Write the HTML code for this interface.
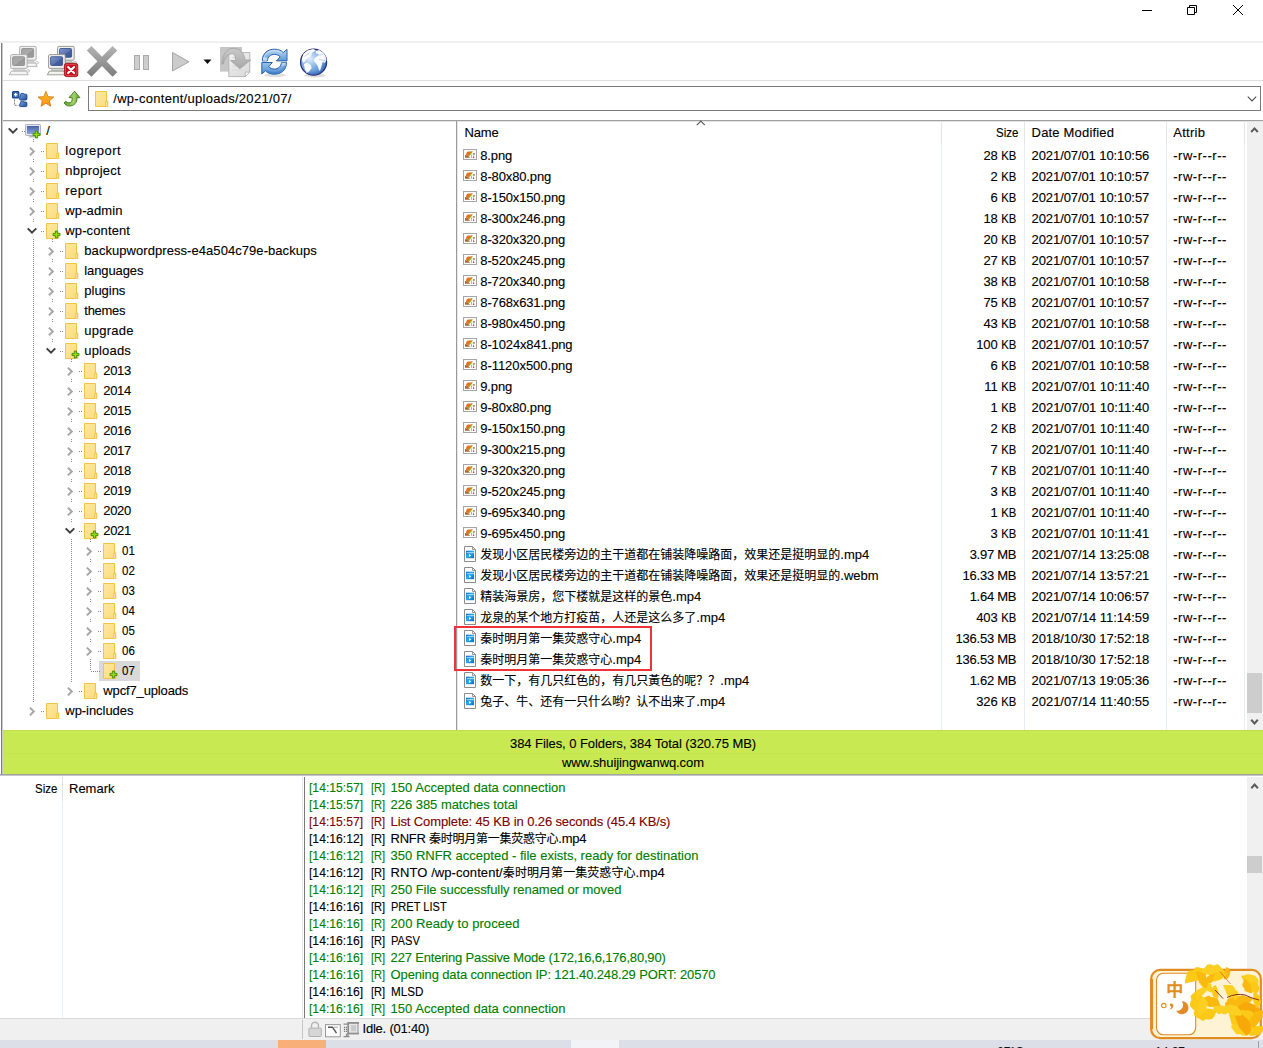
<!DOCTYPE html><html><head><meta charset="utf-8"><title>FTP</title><style>
*{box-sizing:border-box;margin:0;padding:0}
html,body{width:1263px;height:1048px;overflow:hidden;background:#fff}
body{font-family:"Liberation Sans","Noto Sans CJK SC",sans-serif;font-size:13px;color:#000;position:relative;line-height:16px;-webkit-text-stroke:0.12px}
.a{position:absolute;white-space:nowrap}
.cj{font-size:12px}
.t{position:absolute;white-space:nowrap;height:20px;line-height:20px}
.r{position:absolute;white-space:nowrap;height:21px;line-height:21px}
.l{position:absolute;white-space:nowrap;height:17px;line-height:17px}
.s{position:absolute;white-space:nowrap;height:17px;line-height:17px}
.u{display:inline-block;transform:scaleX(.87);transform-origin:100% 50%;margin-left:-2.3px}
.g{color:#008000}.rd{color:#800000}
#ov{position:absolute;left:0;top:0;pointer-events:none}
</style></head><body>
<div class="a" style="left:0px;top:41px;width:1263px;height:2px;background:#f0f0f0;"></div>
<div class="a" style="left:3px;top:80px;width:1260px;height:1px;background:#dedede;"></div>
<div class="a" style="left:1px;top:43px;width:1px;height:731px;background:#7e7e7e;"></div>
<div class="a" style="left:2px;top:43px;width:1px;height:731px;background:#c9c9c9;"></div>
<div class="a" style="left:3px;top:120px;width:1260px;height:1px;background:#a0a0a0;"></div>
<div class="a" style="left:3px;top:121px;width:1260px;height:1px;background:#e4e4e4;"></div>
<div class="a" style="left:88px;top:86px;width:1173px;height:25px;background:#fff;border:1px solid #7a7a7a"></div>
<div class="a" style="left:99px;top:661px;width:41px;height:20px;background:#d9d9d9;"></div>
<div class="a" style="left:456px;top:121px;width:1px;height:609px;background:#9a9a9a;"></div>
<div class="a" style="left:457px;top:121px;width:1px;height:609px;background:#e8e8e8;"></div>
<div class="a" style="left:941px;top:122px;width:1px;height:22px;background:#e5e5e5;"></div>
<div class="a" style="left:941px;top:144px;width:1px;height:586px;background:#e8eef7;"></div>
<div class="a" style="left:1024px;top:122px;width:1px;height:22px;background:#e5e5e5;"></div>
<div class="a" style="left:1024px;top:144px;width:1px;height:586px;background:#e8eef7;"></div>
<div class="a" style="left:1166px;top:122px;width:1px;height:22px;background:#e5e5e5;"></div>
<div class="a" style="left:1166px;top:144px;width:1px;height:586px;background:#e8eef7;"></div>
<div class="a" style="left:1244px;top:122px;width:1px;height:22px;background:#e5e5e5;"></div>
<div class="a" style="left:1244px;top:144px;width:1px;height:586px;background:#e8eef7;"></div>
<div class="a" style="left:454px;top:626px;width:198px;height:44.5px;background:transparent;border:2px solid #f0323a"></div>
<div class="a" style="left:1246.5px;top:122px;width:16.5px;height:608px;background:#f0f0f0;"></div>
<div class="a" style="left:1247px;top:673px;width:15px;height:40px;background:#cdcdcd;"></div>
<div class="a" style="left:3px;top:730px;width:1260px;height:44px;background:#c8e952;"></div>
<div class="a" style="left:3px;top:730px;width:1260px;height:1px;background:#bfe04a;"></div>
<div class="a" style="left:3px;top:753px;width:1260px;height:1px;background:#c4e54f;"></div>
<div class="a" style="left:0px;top:774px;width:1263px;height:1px;background:#a2a2a2;"></div>
<div class="a" style="left:0px;top:775px;width:1263px;height:1px;background:#c6c6c6;"></div>
<div class="a" style="left:62px;top:777px;width:1px;height:24px;background:#e2e2e2;"></div>
<div class="a" style="left:62px;top:801px;width:1px;height:217px;background:#eaf1fb;"></div>
<div class="a" style="left:302px;top:777px;width:1px;height:241px;background:#e6e8f0;"></div>
<div class="a" style="left:304px;top:777px;width:1px;height:241px;background:#7a7a7a;"></div>
<div class="a" style="left:1247px;top:777px;width:16px;height:241px;background:#f0f0f0;"></div>
<div class="a" style="left:1247px;top:856px;width:15px;height:17px;background:#cdcdcd;"></div>
<div class="a" style="left:0px;top:1018px;width:1263px;height:22px;background:#f0f0f0;"></div>
<div class="a" style="left:0px;top:1017.5px;width:1263px;height:1px;background:#dadada;"></div>
<div class="a" style="left:302px;top:1019.5px;width:1px;height:19px;background:#c6c6c6;"></div>
<div class="a" style="left:0px;top:1040px;width:1263px;height:8px;background:#dcdfe8;"></div>
<div class="a" style="left:278px;top:1040px;width:48px;height:8px;background:#f8b078;"></div>
<div class="a" style="left:571px;top:1040px;width:48px;height:8px;background:#f2f3f7;"></div>
<div class="a" style="left:997px;top:1045.500px;font-size:12px;line-height:12px;color:#111">67°C</div>
<div class="a" style="left:1155px;top:1045.500px;font-size:12px;line-height:12px;color:#111">14:27</div>
<div class="a" style="left:1258px;top:1041px;width:1px;height:7px;background:#9aa0ae;"></div>
<div class="s" style="top:90px;left:113.3px;letter-spacing:0.28px;">/wp-content/uploads/2021/07/</div>
<div class="t" style="top:121px;left:46.3px;">/</div>
<div class="t" style="top:141px;left:65.3px;letter-spacing:0.5px;">logreport</div>
<div class="t" style="top:161px;left:65.3px;letter-spacing:0.23px;">nbproject</div>
<div class="t" style="top:181px;left:65.3px;letter-spacing:0.49px;">report</div>
<div class="t" style="top:201px;left:65.3px;letter-spacing:0.12px;">wp-admin</div>
<div class="t" style="top:221px;left:65.3px;letter-spacing:0.12px;">wp-content</div>
<div class="t" style="top:241px;left:84.3px;letter-spacing:0.06px;">backupwordpress-e4a504c79e-backups</div>
<div class="t" style="top:261px;left:84.3px;letter-spacing:-0.1px;">languages</div>
<div class="t" style="top:281px;left:84.3px;letter-spacing:-0.02px;">plugins</div>
<div class="t" style="top:301px;left:84.3px;letter-spacing:-0.27px;">themes</div>
<div class="t" style="top:321px;left:84.3px;letter-spacing:0.25px;">upgrade</div>
<div class="t" style="top:341px;left:84.3px;letter-spacing:0.16px;">uploads</div>
<div class="t" style="top:361px;left:103.3px;letter-spacing:-0.37px;">2013</div>
<div class="t" style="top:381px;left:103.3px;letter-spacing:-0.37px;">2014</div>
<div class="t" style="top:401px;left:103.3px;letter-spacing:-0.37px;">2015</div>
<div class="t" style="top:421px;left:103.3px;letter-spacing:-0.37px;">2016</div>
<div class="t" style="top:441px;left:103.3px;letter-spacing:-0.37px;">2017</div>
<div class="t" style="top:461px;left:103.3px;letter-spacing:-0.37px;">2018</div>
<div class="t" style="top:481px;left:103.3px;letter-spacing:-0.37px;">2019</div>
<div class="t" style="top:501px;left:103.3px;letter-spacing:-0.37px;">2020</div>
<div class="t" style="top:521px;left:103.3px;letter-spacing:-0.37px;">2021</div>
<div class="t" style="top:541px;left:122.3px;transform:scaleX(0.885);transform-origin:0 50%;">01</div>
<div class="t" style="top:561px;left:122.3px;transform:scaleX(0.885);transform-origin:0 50%;">02</div>
<div class="t" style="top:581px;left:122.3px;transform:scaleX(0.885);transform-origin:0 50%;">03</div>
<div class="t" style="top:601px;left:122.3px;transform:scaleX(0.885);transform-origin:0 50%;">04</div>
<div class="t" style="top:621px;left:122.3px;transform:scaleX(0.885);transform-origin:0 50%;">05</div>
<div class="t" style="top:641px;left:122.3px;transform:scaleX(0.885);transform-origin:0 50%;">06</div>
<div class="t" style="top:661px;left:122.3px;transform:scaleX(0.885);transform-origin:0 50%;">07</div>
<div class="t" style="top:681px;left:103.3px;letter-spacing:-0.14px;">wpcf7_uploads</div>
<div class="t" style="top:701px;left:65.3px;letter-spacing:-0.05px;">wp-includes</div>
<div class="r" style="top:122px;left:464.6px;letter-spacing:-0.2px;">Name</div>
<div class="r" style="top:122px;left:996px;transform:scaleX(0.885);transform-origin:0 50%;">Size</div>
<div class="r" style="top:122px;left:1031.6px;letter-spacing:0.18px;">Date Modified</div>
<div class="r" style="top:122px;left:1173.2px;letter-spacing:0.29px;">Attrib</div>
<div class="r" style="top:145px;left:480.3px;letter-spacing:-0.16px;">8.png</div>
<div class="r" style="top:145px;left:983.38px;">28 <span class="u">KB</span></div>
<div class="r" style="top:145px;left:1031.6px;letter-spacing:-0.09px;">2021/07/01 10:10:56</div>
<div class="r" style="top:145px;left:1173.2px;letter-spacing:0.54px;">-rw-r--r--</div>
<div class="r" style="top:166px;left:480.3px;letter-spacing:-0.13px;">8-80x80.png</div>
<div class="r" style="top:166px;left:990.61px;">2 <span class="u">KB</span></div>
<div class="r" style="top:166px;left:1031.6px;letter-spacing:-0.09px;">2021/07/01 10:10:57</div>
<div class="r" style="top:166px;left:1173.2px;letter-spacing:0.54px;">-rw-r--r--</div>
<div class="r" style="top:187px;left:480.3px;letter-spacing:-0.15px;">8-150x150.png</div>
<div class="r" style="top:187px;left:990.61px;">6 <span class="u">KB</span></div>
<div class="r" style="top:187px;left:1031.6px;letter-spacing:-0.09px;">2021/07/01 10:10:57</div>
<div class="r" style="top:187px;left:1173.2px;letter-spacing:0.54px;">-rw-r--r--</div>
<div class="r" style="top:208px;left:480.3px;letter-spacing:-0.15px;">8-300x246.png</div>
<div class="r" style="top:208px;left:983.38px;">18 <span class="u">KB</span></div>
<div class="r" style="top:208px;left:1031.6px;letter-spacing:-0.09px;">2021/07/01 10:10:57</div>
<div class="r" style="top:208px;left:1173.2px;letter-spacing:0.54px;">-rw-r--r--</div>
<div class="r" style="top:229px;left:480.3px;letter-spacing:-0.15px;">8-320x320.png</div>
<div class="r" style="top:229px;left:983.38px;">20 <span class="u">KB</span></div>
<div class="r" style="top:229px;left:1031.6px;letter-spacing:-0.09px;">2021/07/01 10:10:57</div>
<div class="r" style="top:229px;left:1173.2px;letter-spacing:0.54px;">-rw-r--r--</div>
<div class="r" style="top:250px;left:480.3px;letter-spacing:-0.15px;">8-520x245.png</div>
<div class="r" style="top:250px;left:983.38px;">27 <span class="u">KB</span></div>
<div class="r" style="top:250px;left:1031.6px;letter-spacing:-0.09px;">2021/07/01 10:10:57</div>
<div class="r" style="top:250px;left:1173.2px;letter-spacing:0.54px;">-rw-r--r--</div>
<div class="r" style="top:271px;left:480.3px;letter-spacing:-0.15px;">8-720x340.png</div>
<div class="r" style="top:271px;left:983.38px;">38 <span class="u">KB</span></div>
<div class="r" style="top:271px;left:1031.6px;letter-spacing:-0.09px;">2021/07/01 10:10:58</div>
<div class="r" style="top:271px;left:1173.2px;letter-spacing:0.54px;">-rw-r--r--</div>
<div class="r" style="top:292px;left:480.3px;letter-spacing:-0.15px;">8-768x631.png</div>
<div class="r" style="top:292px;left:983.38px;">75 <span class="u">KB</span></div>
<div class="r" style="top:292px;left:1031.6px;letter-spacing:-0.09px;">2021/07/01 10:10:57</div>
<div class="r" style="top:292px;left:1173.2px;letter-spacing:0.54px;">-rw-r--r--</div>
<div class="r" style="top:313px;left:480.3px;letter-spacing:-0.15px;">8-980x450.png</div>
<div class="r" style="top:313px;left:983.38px;">43 <span class="u">KB</span></div>
<div class="r" style="top:313px;left:1031.6px;letter-spacing:-0.09px;">2021/07/01 10:10:58</div>
<div class="r" style="top:313px;left:1173.2px;letter-spacing:0.54px;">-rw-r--r--</div>
<div class="r" style="top:334px;left:480.3px;letter-spacing:-0.13px;">8-1024x841.png</div>
<div class="r" style="top:334px;left:976.14px;">100 <span class="u">KB</span></div>
<div class="r" style="top:334px;left:1031.6px;letter-spacing:-0.09px;">2021/07/01 10:10:57</div>
<div class="r" style="top:334px;left:1173.2px;letter-spacing:0.54px;">-rw-r--r--</div>
<div class="r" style="top:355px;left:480.3px;letter-spacing:-0.06px;">8-1120x500.png</div>
<div class="r" style="top:355px;left:990.61px;">6 <span class="u">KB</span></div>
<div class="r" style="top:355px;left:1031.6px;letter-spacing:-0.09px;">2021/07/01 10:10:58</div>
<div class="r" style="top:355px;left:1173.2px;letter-spacing:0.54px;">-rw-r--r--</div>
<div class="r" style="top:376px;left:480.3px;letter-spacing:-0.16px;">9.png</div>
<div class="r" style="top:376px;left:984.35px;">11 <span class="u">KB</span></div>
<div class="r" style="top:376px;left:1031.6px;letter-spacing:-0.04px;">2021/07/01 10:11:40</div>
<div class="r" style="top:376px;left:1173.2px;letter-spacing:0.54px;">-rw-r--r--</div>
<div class="r" style="top:397px;left:480.3px;letter-spacing:-0.13px;">9-80x80.png</div>
<div class="r" style="top:397px;left:990.61px;">1 <span class="u">KB</span></div>
<div class="r" style="top:397px;left:1031.6px;letter-spacing:-0.04px;">2021/07/01 10:11:40</div>
<div class="r" style="top:397px;left:1173.2px;letter-spacing:0.54px;">-rw-r--r--</div>
<div class="r" style="top:418px;left:480.3px;letter-spacing:-0.15px;">9-150x150.png</div>
<div class="r" style="top:418px;left:990.61px;">2 <span class="u">KB</span></div>
<div class="r" style="top:418px;left:1031.6px;letter-spacing:-0.04px;">2021/07/01 10:11:40</div>
<div class="r" style="top:418px;left:1173.2px;letter-spacing:0.54px;">-rw-r--r--</div>
<div class="r" style="top:439px;left:480.3px;letter-spacing:-0.15px;">9-300x215.png</div>
<div class="r" style="top:439px;left:990.61px;">7 <span class="u">KB</span></div>
<div class="r" style="top:439px;left:1031.6px;letter-spacing:-0.04px;">2021/07/01 10:11:40</div>
<div class="r" style="top:439px;left:1173.2px;letter-spacing:0.54px;">-rw-r--r--</div>
<div class="r" style="top:460px;left:480.3px;letter-spacing:-0.15px;">9-320x320.png</div>
<div class="r" style="top:460px;left:990.61px;">7 <span class="u">KB</span></div>
<div class="r" style="top:460px;left:1031.6px;letter-spacing:-0.04px;">2021/07/01 10:11:40</div>
<div class="r" style="top:460px;left:1173.2px;letter-spacing:0.54px;">-rw-r--r--</div>
<div class="r" style="top:481px;left:480.3px;letter-spacing:-0.15px;">9-520x245.png</div>
<div class="r" style="top:481px;left:990.61px;">3 <span class="u">KB</span></div>
<div class="r" style="top:481px;left:1031.6px;letter-spacing:-0.04px;">2021/07/01 10:11:40</div>
<div class="r" style="top:481px;left:1173.2px;letter-spacing:0.54px;">-rw-r--r--</div>
<div class="r" style="top:502px;left:480.3px;letter-spacing:-0.15px;">9-695x340.png</div>
<div class="r" style="top:502px;left:990.61px;">1 <span class="u">KB</span></div>
<div class="r" style="top:502px;left:1031.6px;letter-spacing:-0.04px;">2021/07/01 10:11:40</div>
<div class="r" style="top:502px;left:1173.2px;letter-spacing:0.54px;">-rw-r--r--</div>
<div class="r" style="top:523px;left:480.3px;letter-spacing:-0.15px;">9-695x450.png</div>
<div class="r" style="top:523px;left:990.61px;">3 <span class="u">KB</span></div>
<div class="r" style="top:523px;left:1031.6px;letter-spacing:-0.04px;">2021/07/01 10:11:41</div>
<div class="r" style="top:523px;left:1173.2px;letter-spacing:0.54px;">-rw-r--r--</div>
<div class="r" style="top:544px;left:480.3px;"><span class="cj">发现小区居民楼旁边的主干道都在铺装降噪路面，效果还是挺明显的</span>.mp4</div>
<div class="r" style="top:544px;left:969.65px;letter-spacing:-0.26px;">3.97 MB</div>
<div class="r" style="top:544px;left:1031.6px;letter-spacing:-0.09px;">2021/07/14 13:25:08</div>
<div class="r" style="top:544px;left:1173.2px;letter-spacing:0.54px;">-rw-r--r--</div>
<div class="r" style="top:565px;left:480.3px;"><span class="cj">发现小区居民楼旁边的主干道都在铺装降噪路面，效果还是挺明显的</span>.webm</div>
<div class="r" style="top:565px;left:962.6px;letter-spacing:-0.25px;">16.33 MB</div>
<div class="r" style="top:565px;left:1031.6px;letter-spacing:-0.09px;">2021/07/14 13:57:21</div>
<div class="r" style="top:565px;left:1173.2px;letter-spacing:0.54px;">-rw-r--r--</div>
<div class="r" style="top:586px;left:480.3px;"><span class="cj">精装海景房，您下楼就是这样的景色</span>.mp4</div>
<div class="r" style="top:586px;left:969.65px;letter-spacing:-0.26px;">1.64 MB</div>
<div class="r" style="top:586px;left:1031.6px;letter-spacing:-0.09px;">2021/07/14 10:06:57</div>
<div class="r" style="top:586px;left:1173.2px;letter-spacing:0.54px;">-rw-r--r--</div>
<div class="r" style="top:607px;left:480.3px;"><span class="cj">龙泉的某个地方打疫苗，人还是这么多了</span>.mp4</div>
<div class="r" style="top:607px;left:976.14px;">403 <span class="u">KB</span></div>
<div class="r" style="top:607px;left:1031.6px;letter-spacing:-0.04px;">2021/07/14 11:14:59</div>
<div class="r" style="top:607px;left:1173.2px;letter-spacing:0.54px;">-rw-r--r--</div>
<div class="r" style="top:628px;left:480.3px;"><span class="cj">秦时明月第一集荧惑守心</span>.mp4</div>
<div class="r" style="top:628px;left:955.55px;letter-spacing:-0.24px;">136.53 MB</div>
<div class="r" style="top:628px;left:1031.6px;letter-spacing:-0.09px;">2018/10/30 17:52:18</div>
<div class="r" style="top:628px;left:1173.2px;letter-spacing:0.54px;">-rw-r--r--</div>
<div class="r" style="top:649px;left:480.3px;"><span class="cj">秦时明月第一集荧惑守心</span>.mp4</div>
<div class="r" style="top:649px;left:955.55px;letter-spacing:-0.24px;">136.53 MB</div>
<div class="r" style="top:649px;left:1031.6px;letter-spacing:-0.09px;">2018/10/30 17:52:18</div>
<div class="r" style="top:649px;left:1173.2px;letter-spacing:0.54px;">-rw-r--r--</div>
<div class="r" style="top:670px;left:480.3px;"><span class="cj">数一下，有几只红色的，有几只黃色的呢？？</span>.mp4</div>
<div class="r" style="top:670px;left:969.65px;letter-spacing:-0.26px;">1.62 MB</div>
<div class="r" style="top:670px;left:1031.6px;letter-spacing:-0.09px;">2021/07/13 19:05:36</div>
<div class="r" style="top:670px;left:1173.2px;letter-spacing:0.54px;">-rw-r--r--</div>
<div class="r" style="top:691px;left:480.3px;"><span class="cj">兔子、牛、还有一只什么哟？认不出来了</span>.mp4</div>
<div class="r" style="top:691px;left:976.14px;">326 <span class="u">KB</span></div>
<div class="r" style="top:691px;left:1031.6px;letter-spacing:-0.04px;">2021/07/14 11:40:55</div>
<div class="r" style="top:691px;left:1173.2px;letter-spacing:0.54px;">-rw-r--r--</div>
<div class="s" style="top:735px;left:510px;letter-spacing:-0.07px;">384 Files, 0 Folders, 384 Total (320.75 MB)</div>
<div class="s" style="top:754px;left:562px;letter-spacing:-0.09px;">www.shuijingwanwq.com</div>
<div class="s" style="top:780px;left:34.5px;transform:scaleX(0.882);transform-origin:0 50%;">Size</div>
<div class="s" style="top:780px;left:69px;">Remark</div>
<div class="l g" style="top:779px;left:308.7px;transform:scaleX(0.934);transform-origin:0 50%;">[14:15:57]</div>
<div class="l g" style="top:779px;left:370.7px;transform:scaleX(0.850);transform-origin:0 50%;">[R]</div>
<div class="l g" style="top:779px;left:390.6px;letter-spacing:0.03px;">150 Accepted data connection</div>
<div class="l g" style="top:796px;left:308.7px;transform:scaleX(0.934);transform-origin:0 50%;">[14:15:57]</div>
<div class="l g" style="top:796px;left:370.7px;transform:scaleX(0.850);transform-origin:0 50%;">[R]</div>
<div class="l g" style="top:796px;left:390.6px;letter-spacing:-0.04px;">226 385 matches total</div>
<div class="l rd" style="top:813px;left:308.7px;transform:scaleX(0.934);transform-origin:0 50%;">[14:15:57]</div>
<div class="l rd" style="top:813px;left:370.7px;transform:scaleX(0.850);transform-origin:0 50%;">[R]</div>
<div class="l rd" style="top:813px;left:390.6px;letter-spacing:-0.12px;">List Complete: 45 KB in 0.26 seconds (45.4 KB/s)</div>
<div class="l " style="top:830px;left:308.7px;transform:scaleX(0.934);transform-origin:0 50%;">[14:16:12]</div>
<div class="l " style="top:830px;left:370.7px;transform:scaleX(0.850);transform-origin:0 50%;">[R]</div>
<div class="l " style="top:830px;left:390.6px;letter-spacing:-0.25px;">RNFR <span class="cj">秦时明月第一集荧惑守心</span>.mp4</div>
<div class="l g" style="top:847px;left:308.7px;transform:scaleX(0.934);transform-origin:0 50%;">[14:16:12]</div>
<div class="l g" style="top:847px;left:370.7px;transform:scaleX(0.850);transform-origin:0 50%;">[R]</div>
<div class="l g" style="top:847px;left:390.6px;">350 RNFR accepted - file exists, ready for destination</div>
<div class="l " style="top:864px;left:308.7px;transform:scaleX(0.934);transform-origin:0 50%;">[14:16:12]</div>
<div class="l " style="top:864px;left:370.7px;transform:scaleX(0.850);transform-origin:0 50%;">[R]</div>
<div class="l " style="top:864px;left:390.6px;letter-spacing:0.07px;">RNTO /wp-content/<span class="cj">秦时明月第一集荧惑守心</span>.mp4</div>
<div class="l g" style="top:881px;left:308.7px;transform:scaleX(0.934);transform-origin:0 50%;">[14:16:12]</div>
<div class="l g" style="top:881px;left:370.7px;transform:scaleX(0.850);transform-origin:0 50%;">[R]</div>
<div class="l g" style="top:881px;left:390.6px;letter-spacing:-0.05px;">250 File successfully renamed or moved</div>
<div class="l " style="top:898px;left:308.7px;transform:scaleX(0.934);transform-origin:0 50%;">[14:16:16]</div>
<div class="l " style="top:898px;left:370.7px;transform:scaleX(0.850);transform-origin:0 50%;">[R]</div>
<div class="l " style="top:898px;left:390.6px;transform:scaleX(0.850);transform-origin:0 50%;">PRET LIST</div>
<div class="l g" style="top:915px;left:308.7px;transform:scaleX(0.934);transform-origin:0 50%;">[14:16:16]</div>
<div class="l g" style="top:915px;left:370.7px;transform:scaleX(0.850);transform-origin:0 50%;">[R]</div>
<div class="l g" style="top:915px;left:390.6px;letter-spacing:0.05px;">200 Ready to proceed</div>
<div class="l " style="top:932px;left:308.7px;transform:scaleX(0.934);transform-origin:0 50%;">[14:16:16]</div>
<div class="l " style="top:932px;left:370.7px;transform:scaleX(0.850);transform-origin:0 50%;">[R]</div>
<div class="l " style="top:932px;left:390.6px;transform:scaleX(0.857);transform-origin:0 50%;">PASV</div>
<div class="l g" style="top:949px;left:308.7px;transform:scaleX(0.934);transform-origin:0 50%;">[14:16:16]</div>
<div class="l g" style="top:949px;left:370.7px;transform:scaleX(0.850);transform-origin:0 50%;">[R]</div>
<div class="l g" style="top:949px;left:390.6px;letter-spacing:-0.18px;">227 Entering Passive Mode (172,16,6,176,80,90)</div>
<div class="l g" style="top:966px;left:308.7px;transform:scaleX(0.934);transform-origin:0 50%;">[14:16:16]</div>
<div class="l g" style="top:966px;left:370.7px;transform:scaleX(0.850);transform-origin:0 50%;">[R]</div>
<div class="l g" style="top:966px;left:390.6px;letter-spacing:-0.14px;">Opening data connection IP: 121.40.248.29 PORT: 20570</div>
<div class="l " style="top:983px;left:308.7px;transform:scaleX(0.934);transform-origin:0 50%;">[14:16:16]</div>
<div class="l " style="top:983px;left:370.7px;transform:scaleX(0.850);transform-origin:0 50%;">[R]</div>
<div class="l " style="top:983px;left:390.6px;transform:scaleX(0.897);transform-origin:0 50%;">MLSD</div>
<div class="l g" style="top:1000px;left:308.7px;transform:scaleX(0.934);transform-origin:0 50%;">[14:16:16]</div>
<div class="l g" style="top:1000px;left:370.7px;transform:scaleX(0.850);transform-origin:0 50%;">[R]</div>
<div class="l g" style="top:1000px;left:390.6px;letter-spacing:0.03px;">150 Accepted data connection</div>
<div class="s" style="top:1020px;left:362.5px;letter-spacing:-0.21px;">Idle. (01:40)</div>
<svg id="ov" width="1263" height="1048" viewBox="0 0 1263 1048"><defs>
<linearGradient id="bscr" x1="0" y1="0" x2="1" y2="1"><stop offset="0" stop-color="#8097c8"/><stop offset="0.55" stop-color="#5a73b0"/><stop offset="0.56" stop-color="#46609f"/><stop offset="1" stop-color="#3c5598"/></linearGradient>
<linearGradient id="gscr" x1="0" y1="0" x2="1" y2="1"><stop offset="0" stop-color="#a5a5a5"/><stop offset="0.55" stop-color="#a9a9a9"/><stop offset="0.56" stop-color="#979797"/><stop offset="1" stop-color="#9d9d9d"/></linearGradient>
<linearGradient id="xg" gradientUnits="userSpaceOnUse" x1="0" y1="46" x2="0" y2="77"><stop offset="0" stop-color="#b4b4b4"/><stop offset="1" stop-color="#7b7b7b"/></linearGradient>
<radialGradient id="glb" cx="0.36" cy="0.36" r="0.75"><stop offset="0" stop-color="#e3eefb"/><stop offset="0.5" stop-color="#7fb0e4"/><stop offset="1" stop-color="#3a78c6"/></radialGradient><radialGradient id="glsh" cx="0.4" cy="0.35" r="0.7"><stop offset="0.7" stop-color="#1d3f8a" stop-opacity="0"/><stop offset="1" stop-color="#1d3f8a" stop-opacity="0.350"/></radialGradient>
<linearGradient id="rf" x1="0" y1="0" x2="0" y2="1"><stop offset="0" stop-color="#bcd8f3"/><stop offset="1" stop-color="#5c98da"/></linearGradient>
<linearGradient id="rf2" x1="0" y1="0" x2="0" y2="1"><stop offset="0" stop-color="#4a88d0"/><stop offset="1" stop-color="#9cc4ee"/></linearGradient>
<linearGradient id="tf" x1="0" y1="0" x2="1" y2="1"><stop offset="0" stop-color="#7fa6de"/><stop offset="1" stop-color="#1f4f9f"/></linearGradient>
<linearGradient id="stg" x1="0" y1="0" x2="0" y2="1"><stop offset="0" stop-color="#ffc21a"/><stop offset="1" stop-color="#ff8a1f"/></linearGradient>
<linearGradient id="upg" x1="0" y1="0" x2="1" y2="0"><stop offset="0" stop-color="#5a9a2a"/><stop offset="0.6" stop-color="#a2d169"/><stop offset="1" stop-color="#5fa02f"/></linearGradient>
<linearGradient id="fold" x1="0" y1="0" x2="1" y2="1"><stop offset="0" stop-color="#fde8a0"/><stop offset="1" stop-color="#fbdc7c"/></linearGradient>
<linearGradient id="pcs" x1="0" y1="0" x2="0" y2="1"><stop offset="0" stop-color="#4862a4"/><stop offset="1" stop-color="#8fa6dc"/></linearGradient>
<linearGradient id="vid" x1="0" y1="0" x2="1" y2="1"><stop offset="0" stop-color="#0a6bd0"/><stop offset="0.45" stop-color="#2aaeea"/><stop offset="1" stop-color="#0868cc"/></linearGradient>
<linearGradient id="pg" x1="0" y1="0" x2="0.6" y2="1"><stop offset="0" stop-color="#f4f4f4"/><stop offset="1" stop-color="#dcdcdc"/></linearGradient>
<linearGradient id="arw" x1="0" y1="0" x2="0" y2="1"><stop offset="0" stop-color="#c9c9c9"/><stop offset="1" stop-color="#a9a9a9"/></linearGradient>
</defs><g fill="none" stroke="#000" stroke-width="1"><path d="M1142 10.500h10"/><path d="M1187.500 7.500h7v7h-7z M1189.500 7.500v-2h7v7h-2"/><path d="M1233 5l10 10m0-10l-10 10"/></g>
<rect x="19.6" y="46.4" width="16.6" height="13.8" rx="1.2" fill="#f0f0f0" stroke="#a9a9a9" stroke-width="0.9"/><rect x="21.6" y="48.5" width="12" height="8.8" rx="1" fill="url(#gscr)" stroke="#8a8a8a" stroke-width="0.8"/><path d="M23.2 60.4h10l1 1.8h-12z" fill="#d9d9d9" stroke="#a9a9a9" stroke-width="0.5"/><path d="M20.2 63h15.5l1.6 3.6h-19z" fill="#ececec" stroke="#a9a9a9" stroke-width="0.8"/><path d="M20.8 64.7h14" stroke="#fff" stroke-width="0.8"/><ellipse cx="36.9" cy="62.7" rx="1.9" ry="1.1" fill="#f6f6f6" stroke="#a9a9a9" stroke-width="0.6"/><rect x="10.6" y="54.6" width="16.6" height="13.8" rx="1.2" fill="#f0f0f0" stroke="#a9a9a9" stroke-width="0.9"/><rect x="12.6" y="56.7" width="12" height="8.8" rx="1" fill="url(#gscr)" stroke="#8a8a8a" stroke-width="0.8"/><path d="M14.2 68.6h10l1 1.8h-12z" fill="#d9d9d9" stroke="#a9a9a9" stroke-width="0.5"/><path d="M11.2 71.2h15.5l1.6 3.6h-19z" fill="#ececec" stroke="#a9a9a9" stroke-width="0.8"/><path d="M11.8 72.9h14" stroke="#fff" stroke-width="0.8"/><ellipse cx="27.9" cy="70.9" rx="1.9" ry="1.1" fill="#f6f6f6" stroke="#a9a9a9" stroke-width="0.6"/>
<rect x="57.6" y="46.4" width="16.6" height="13.8" rx="1.2" fill="#f1f1ef" stroke="#8e8e88" stroke-width="0.9"/><rect x="59.6" y="48.5" width="12" height="8.8" rx="1" fill="url(#bscr)" stroke="#2f4a8c" stroke-width="0.8"/><path d="M61.2 60.4h10l1 1.8h-12z" fill="#d9d9d9" stroke="#8e8e88" stroke-width="0.5"/><path d="M58.2 63h15.5l1.6 3.6h-19z" fill="#e9e9e6" stroke="#8e8e88" stroke-width="0.8"/><path d="M58.8 64.7h14" stroke="#fff" stroke-width="0.8"/><ellipse cx="74.9" cy="62.7" rx="1.9" ry="1.1" fill="#f6f6f6" stroke="#8e8e88" stroke-width="0.6"/><rect x="48.6" y="54.6" width="16.6" height="13.8" rx="1.2" fill="#f1f1ef" stroke="#8e8e88" stroke-width="0.9"/><rect x="50.6" y="56.7" width="12" height="8.8" rx="1" fill="url(#bscr)" stroke="#2f4a8c" stroke-width="0.8"/><path d="M52.2 68.6h10l1 1.8h-12z" fill="#d9d9d9" stroke="#8e8e88" stroke-width="0.5"/><path d="M49.2 71.2h15.5l1.6 3.6h-19z" fill="#e9e9e6" stroke="#8e8e88" stroke-width="0.8"/><path d="M49.8 72.9h14" stroke="#fff" stroke-width="0.8"/><ellipse cx="65.9" cy="70.9" rx="1.9" ry="1.1" fill="#f6f6f6" stroke="#8e8e88" stroke-width="0.6"/><rect x="64.4" y="63.4" width="13.4" height="13.2" rx="2.2" fill="#c9101c" stroke="#a40d16" stroke-width="0.9"/><rect x="65.4" y="64.4" width="11.4" height="11.2" rx="1.6" fill="none" stroke="#e4606a" stroke-width="0.7"/><path d="M68.1 67l6 6m0-6l-6 6" stroke="#fff" stroke-width="2" stroke-linecap="round"/>
<path d="M89.100 48.300l25.800 26.200M114.900 48.300l-25.800 26.200" stroke="url(#xg)" stroke-width="6.600" stroke-linecap="butt"/>
<rect x="134.5" y="55.5" width="5" height="14" fill="#cdcdcd" stroke="#ababab" stroke-width="1"/><rect x="143.5" y="55.5" width="5" height="14" fill="#cdcdcd" stroke="#ababab" stroke-width="1"/>
<path d="M172.5 52.5v18.5l16.5-9.2z" fill="#cbcbcb" stroke="#a6a6a6" stroke-width="1"/><path d="M203.5 59.5h8l-4 4.5z" fill="#111"/>
<rect x="220" y="47" width="22" height="24.600" fill="#c6c6c6"/><path d="M228.800 52.600h21v19.500l-4.500 4.500h-16.500z" fill="url(#pg)" stroke="#b0b0b0" stroke-width="0.900"/><path d="M245.300 76.600v-4.500h4.500z" fill="#fafafa" stroke="#b0b0b0" stroke-width="0.800" stroke-linejoin="round"/><path d="M232 57.500h14M232 61.500h14M232 66h14M232 70h11" stroke="#d6d6d6" stroke-width="0.800"/><path d="M221.800 64C222.500 54 227 48.200 233 48.200C240 48.200 244.500 53 244.900 60L250.600 60L239.800 68.700L230.500 60.500L235.700 60.500C235.500 56.500 234.300 53.800 232 53.800C228 53.800 224.500 57.500 223.300 64Z" fill="url(#arw)" stroke="#a2a2a2" stroke-width="0.800" stroke-linejoin="round"/>
<ellipse cx="275" cy="75.300" rx="11" ry="1.700" fill="#000" opacity="0.130"/><path d="M262.300 60.900C262.300 53 268 49.200 274.500 49.200C278.500 49.200 281.500 50.500 283.300 52.600L287 49.400V60.900H276.400L280.200 56.800C278.500 55.200 276.800 54.400 274.500 54.400C270.500 54.400 267.700 57 267.400 60.900Z" fill="url(#rf)" stroke="#2b64ae" stroke-width="1" stroke-linejoin="round"/><path d="M263.800 59.500C264.300 54 269 50.600 274.500 50.600C277.500 50.600 280 51.500 282 53" fill="none" stroke="#cfe3f7" stroke-width="1" opacity="0.850"/><g transform="rotate(180 274.400 61.700)"><path d="M262.300 60.900C262.300 53 268 49.200 274.500 49.200C278.500 49.200 281.500 50.500 283.300 52.600L287 49.400V60.900H276.400L280.200 56.800C278.500 55.200 276.800 54.400 274.500 54.400C270.500 54.400 267.700 57 267.400 60.900Z" fill="url(#rf2)" stroke="#2b64ae" stroke-width="1" stroke-linejoin="round"/><path d="M263.800 59.500C264.300 54 269 50.600 274.500 50.600C277.500 50.600 280 51.500 282 53" fill="none" stroke="#2f6fbd" stroke-width="1" opacity="0.500"/></g><path d="M263 61v-3.500h4.200v3.500z" fill="#fff" opacity="0.550"/><path d="M281.600 62.300h4.300v3.500h-4.300z" fill="#fff" opacity="0.350"/>
<ellipse cx="315" cy="75.600" rx="11" ry="1.800" fill="#000" opacity="0.140"/><circle cx="313.600" cy="62.200" r="13" fill="url(#glb)" stroke="#2b2f7c" stroke-width="1.300"/><g fill="#fbfcfe"><path d="M301.800 59l1.600-5l4-3.400l5.600-1.600l2.600 1.200l-3.600 2.800l-1.400 3.600l-3.600 2l-2.400 3.400l-1.800 0.600z"/><path d="M304 64l3-1.400l4 2.700l0.400 2.900l-2.600 3.800l-2.200 1l-1.800-3.400z"/><path d="M315.500 51.500l3.500-1.500l4 2.500l2.500 3.500l1 4l-1.500 3l-2.500-1l-1 4l-1 4l-1.500 1l-1-4.500l-2-3l-2.200-2.500l0.700-3l2.500-1.500l1.500-2.500l-2.500-0.500z"/></g><path d="M304.500 56.500l5-3.700M316.500 55.500l6.500-1M319 59.500l5.500 1" stroke="#9fc3ea" stroke-width="0.700" fill="none"/><circle cx="313.600" cy="62.200" r="12.400" fill="url(#glsh)"/>
<rect x="12.500" y="91.500" width="6.400" height="6.400" rx="1" fill="#3b6fc0" stroke="#173f86" stroke-width="1.100"/><path d="M15.700 93v3.400M14 94.700h3.400" stroke="#fff" stroke-width="1.300"/><path d="M14.500 99.500v5.800h4" fill="none" stroke="#777" stroke-width="0.900" stroke-dasharray="2 1"/><path d="M20.6 94.5q0-1.100 1.100-1.100h1.700l0.700 0.800h1.7q1.100 0 1.100 1.100v3.6q0 1.100-1.100 1.100h-5.2q-1.100 0-1.100-1.100z" fill="url(#tf)" stroke="#173f86" stroke-width="0.900"/><path d="M20.6 102.3q0-1.100 1.100-1.100h1.700l0.700 0.800h1.7q1.100 0 1.100 1.100v2.4q0 1.100-1.100 1.100h-5.2q-1.100 0-1.100-1.100z" fill="url(#tf)" stroke="#173f86" stroke-width="0.900"/>
<polygon points="45.90,91.30 48.02,96.69 53.79,97.04 49.32,100.71 50.78,106.31 45.90,103.20 41.02,106.31 42.48,100.71 38.01,97.04 43.78,96.69" fill="url(#stg)" stroke="#d58a22" stroke-width="1" stroke-linejoin="round"/>
<path d="M74.500 91.200l5.500 6.500h-3c0.300 5-3 8.300-7.500 8.300c-2.500 0-4.500-1.200-5.500-3.200l1.800-1.500c1 1 2 1.500 3.200 1.500c2.300 0 3.500-2 3.200-5.100h-3.200z" fill="url(#upg)" stroke="#3f7a1e" stroke-width="0.900" stroke-linejoin="round"/>
<path d="M1247.800 96.600l4.200 4.300l4.200-4.300" fill="none" stroke="#505050" stroke-width="1.100"/>
<path d="M95.5 91.5h11v9.500h1.300v5.500h-12.300z" fill="url(#fold)" stroke="#efc448" stroke-width="1"/>
<path d="M107.2 106.5v-5h-1.700v5" fill="#fdeaa8" stroke="#efc448" stroke-width="0.800"/>
<rect x="25.500" y="124.500" width="15" height="11" rx="0.800" fill="#e4e4ec" stroke="#b3b0c2" stroke-width="1"/>
<rect x="27" y="126" width="12" height="8" fill="url(#pcs)"/>
<path d="M30 136h5l0.500 1.500h-7.500z" fill="#b8b8bc"/>
<path d="M35.4 131h2.200v2.400h2.400v2.200h-2.400v2.400h-2.200v-2.400h-2.400v-2.200h2.400z" fill="#93de0a" stroke="#3f8a06" stroke-width="0.900" stroke-linejoin="round"/>
<path d="M8.7 128.4l4.300 4.200l4.300-4.200" fill="none" stroke="#404040" stroke-width="2"/>
<path d="M22 131.5h4" stroke="#8a8a8a" stroke-width="1" stroke-dasharray="1 1"/>
<path d="M46.5 143.5h11v9.500h1.300v5.500h-12.300z" fill="url(#fold)" stroke="#efc448" stroke-width="1"/>
<path d="M58.2 158.5v-5h-1.700v5" fill="#fdeaa8" stroke="#efc448" stroke-width="0.800"/>
<path d="M29.9 147.6l3.900 3.900l-3.900 3.900" fill="none" stroke="#a6a6a6" stroke-width="2"/>
<path d="M41 151.5h4" stroke="#8a8a8a" stroke-width="1" stroke-dasharray="1 1"/>
<path d="M46.5 163.5h11v9.500h1.300v5.500h-12.300z" fill="url(#fold)" stroke="#efc448" stroke-width="1"/>
<path d="M58.2 178.5v-5h-1.700v5" fill="#fdeaa8" stroke="#efc448" stroke-width="0.800"/>
<path d="M29.9 167.6l3.900 3.900l-3.900 3.900" fill="none" stroke="#a6a6a6" stroke-width="2"/>
<path d="M41 171.5h4" stroke="#8a8a8a" stroke-width="1" stroke-dasharray="1 1"/>
<path d="M46.5 183.5h11v9.500h1.300v5.500h-12.300z" fill="url(#fold)" stroke="#efc448" stroke-width="1"/>
<path d="M58.2 198.5v-5h-1.700v5" fill="#fdeaa8" stroke="#efc448" stroke-width="0.800"/>
<path d="M29.9 187.6l3.900 3.900l-3.900 3.900" fill="none" stroke="#a6a6a6" stroke-width="2"/>
<path d="M41 191.5h4" stroke="#8a8a8a" stroke-width="1" stroke-dasharray="1 1"/>
<path d="M46.5 203.5h11v9.500h1.300v5.500h-12.300z" fill="url(#fold)" stroke="#efc448" stroke-width="1"/>
<path d="M58.2 218.5v-5h-1.700v5" fill="#fdeaa8" stroke="#efc448" stroke-width="0.800"/>
<path d="M29.9 207.6l3.900 3.900l-3.900 3.900" fill="none" stroke="#a6a6a6" stroke-width="2"/>
<path d="M41 211.5h4" stroke="#8a8a8a" stroke-width="1" stroke-dasharray="1 1"/>
<path d="M46.5 223.5h11v9.500h1.300v5.500h-12.300z" fill="url(#fold)" stroke="#efc448" stroke-width="1"/>
<path d="M58.2 238.5v-5h-1.700v5" fill="#fdeaa8" stroke="#efc448" stroke-width="0.800"/>
<path d="M55.4 231h2.200v2.400h2.400v2.200h-2.400v2.400h-2.200v-2.400h-2.400v-2.200h2.400z" fill="#93de0a" stroke="#3f8a06" stroke-width="0.900" stroke-linejoin="round"/>
<path d="M27.7 228.4l4.300 4.200l4.300-4.200" fill="none" stroke="#404040" stroke-width="2"/>
<path d="M41 231.5h4" stroke="#8a8a8a" stroke-width="1" stroke-dasharray="1 1"/>
<path d="M65.5 243.5h11v9.500h1.300v5.500h-12.300z" fill="url(#fold)" stroke="#efc448" stroke-width="1"/>
<path d="M77.2 258.5v-5h-1.700v5" fill="#fdeaa8" stroke="#efc448" stroke-width="0.800"/>
<path d="M48.9 247.6l3.900 3.900l-3.900 3.900" fill="none" stroke="#a6a6a6" stroke-width="2"/>
<path d="M60 251.5h4" stroke="#8a8a8a" stroke-width="1" stroke-dasharray="1 1"/>
<path d="M65.5 263.5h11v9.500h1.300v5.500h-12.300z" fill="url(#fold)" stroke="#efc448" stroke-width="1"/>
<path d="M77.2 278.5v-5h-1.700v5" fill="#fdeaa8" stroke="#efc448" stroke-width="0.800"/>
<path d="M48.9 267.6l3.900 3.900l-3.900 3.900" fill="none" stroke="#a6a6a6" stroke-width="2"/>
<path d="M60 271.5h4" stroke="#8a8a8a" stroke-width="1" stroke-dasharray="1 1"/>
<path d="M65.5 283.5h11v9.500h1.300v5.500h-12.300z" fill="url(#fold)" stroke="#efc448" stroke-width="1"/>
<path d="M77.2 298.5v-5h-1.700v5" fill="#fdeaa8" stroke="#efc448" stroke-width="0.800"/>
<path d="M48.9 287.6l3.900 3.900l-3.900 3.900" fill="none" stroke="#a6a6a6" stroke-width="2"/>
<path d="M60 291.5h4" stroke="#8a8a8a" stroke-width="1" stroke-dasharray="1 1"/>
<path d="M65.5 303.5h11v9.500h1.300v5.500h-12.300z" fill="url(#fold)" stroke="#efc448" stroke-width="1"/>
<path d="M77.2 318.5v-5h-1.700v5" fill="#fdeaa8" stroke="#efc448" stroke-width="0.800"/>
<path d="M48.9 307.6l3.900 3.900l-3.900 3.900" fill="none" stroke="#a6a6a6" stroke-width="2"/>
<path d="M60 311.5h4" stroke="#8a8a8a" stroke-width="1" stroke-dasharray="1 1"/>
<path d="M65.5 323.5h11v9.500h1.300v5.500h-12.300z" fill="url(#fold)" stroke="#efc448" stroke-width="1"/>
<path d="M77.2 338.5v-5h-1.700v5" fill="#fdeaa8" stroke="#efc448" stroke-width="0.800"/>
<path d="M48.9 327.6l3.900 3.900l-3.900 3.900" fill="none" stroke="#a6a6a6" stroke-width="2"/>
<path d="M60 331.5h4" stroke="#8a8a8a" stroke-width="1" stroke-dasharray="1 1"/>
<path d="M65.5 343.5h11v9.500h1.300v5.500h-12.300z" fill="url(#fold)" stroke="#efc448" stroke-width="1"/>
<path d="M77.2 358.5v-5h-1.700v5" fill="#fdeaa8" stroke="#efc448" stroke-width="0.800"/>
<path d="M74.4 351h2.200v2.400h2.400v2.200h-2.400v2.400h-2.200v-2.400h-2.400v-2.200h2.400z" fill="#93de0a" stroke="#3f8a06" stroke-width="0.900" stroke-linejoin="round"/>
<path d="M46.7 348.4l4.300 4.200l4.300-4.200" fill="none" stroke="#404040" stroke-width="2"/>
<path d="M60 351.5h4" stroke="#8a8a8a" stroke-width="1" stroke-dasharray="1 1"/>
<path d="M84.5 363.5h11v9.500h1.300v5.500h-12.300z" fill="url(#fold)" stroke="#efc448" stroke-width="1"/>
<path d="M96.2 378.5v-5h-1.700v5" fill="#fdeaa8" stroke="#efc448" stroke-width="0.800"/>
<path d="M67.9 367.6l3.900 3.900l-3.900 3.900" fill="none" stroke="#a6a6a6" stroke-width="2"/>
<path d="M79 371.5h4" stroke="#8a8a8a" stroke-width="1" stroke-dasharray="1 1"/>
<path d="M84.5 383.5h11v9.500h1.300v5.500h-12.300z" fill="url(#fold)" stroke="#efc448" stroke-width="1"/>
<path d="M96.2 398.5v-5h-1.700v5" fill="#fdeaa8" stroke="#efc448" stroke-width="0.800"/>
<path d="M67.9 387.6l3.900 3.900l-3.900 3.900" fill="none" stroke="#a6a6a6" stroke-width="2"/>
<path d="M79 391.5h4" stroke="#8a8a8a" stroke-width="1" stroke-dasharray="1 1"/>
<path d="M84.5 403.5h11v9.500h1.300v5.500h-12.300z" fill="url(#fold)" stroke="#efc448" stroke-width="1"/>
<path d="M96.2 418.5v-5h-1.700v5" fill="#fdeaa8" stroke="#efc448" stroke-width="0.800"/>
<path d="M67.9 407.6l3.900 3.900l-3.900 3.900" fill="none" stroke="#a6a6a6" stroke-width="2"/>
<path d="M79 411.5h4" stroke="#8a8a8a" stroke-width="1" stroke-dasharray="1 1"/>
<path d="M84.5 423.5h11v9.500h1.300v5.500h-12.300z" fill="url(#fold)" stroke="#efc448" stroke-width="1"/>
<path d="M96.2 438.5v-5h-1.700v5" fill="#fdeaa8" stroke="#efc448" stroke-width="0.800"/>
<path d="M67.9 427.6l3.900 3.900l-3.900 3.900" fill="none" stroke="#a6a6a6" stroke-width="2"/>
<path d="M79 431.5h4" stroke="#8a8a8a" stroke-width="1" stroke-dasharray="1 1"/>
<path d="M84.5 443.5h11v9.500h1.300v5.500h-12.300z" fill="url(#fold)" stroke="#efc448" stroke-width="1"/>
<path d="M96.2 458.5v-5h-1.700v5" fill="#fdeaa8" stroke="#efc448" stroke-width="0.800"/>
<path d="M67.9 447.6l3.900 3.900l-3.900 3.900" fill="none" stroke="#a6a6a6" stroke-width="2"/>
<path d="M79 451.5h4" stroke="#8a8a8a" stroke-width="1" stroke-dasharray="1 1"/>
<path d="M84.5 463.5h11v9.500h1.300v5.500h-12.300z" fill="url(#fold)" stroke="#efc448" stroke-width="1"/>
<path d="M96.2 478.5v-5h-1.700v5" fill="#fdeaa8" stroke="#efc448" stroke-width="0.800"/>
<path d="M67.9 467.6l3.900 3.900l-3.900 3.900" fill="none" stroke="#a6a6a6" stroke-width="2"/>
<path d="M79 471.5h4" stroke="#8a8a8a" stroke-width="1" stroke-dasharray="1 1"/>
<path d="M84.5 483.5h11v9.500h1.300v5.500h-12.300z" fill="url(#fold)" stroke="#efc448" stroke-width="1"/>
<path d="M96.2 498.5v-5h-1.700v5" fill="#fdeaa8" stroke="#efc448" stroke-width="0.800"/>
<path d="M67.9 487.6l3.900 3.900l-3.900 3.900" fill="none" stroke="#a6a6a6" stroke-width="2"/>
<path d="M79 491.5h4" stroke="#8a8a8a" stroke-width="1" stroke-dasharray="1 1"/>
<path d="M84.5 503.5h11v9.500h1.300v5.500h-12.300z" fill="url(#fold)" stroke="#efc448" stroke-width="1"/>
<path d="M96.2 518.5v-5h-1.700v5" fill="#fdeaa8" stroke="#efc448" stroke-width="0.800"/>
<path d="M67.9 507.6l3.900 3.900l-3.900 3.900" fill="none" stroke="#a6a6a6" stroke-width="2"/>
<path d="M79 511.5h4" stroke="#8a8a8a" stroke-width="1" stroke-dasharray="1 1"/>
<path d="M84.5 523.5h11v9.500h1.300v5.500h-12.300z" fill="url(#fold)" stroke="#efc448" stroke-width="1"/>
<path d="M96.2 538.5v-5h-1.700v5" fill="#fdeaa8" stroke="#efc448" stroke-width="0.800"/>
<path d="M93.4 531h2.200v2.400h2.400v2.200h-2.400v2.400h-2.200v-2.400h-2.400v-2.200h2.400z" fill="#93de0a" stroke="#3f8a06" stroke-width="0.900" stroke-linejoin="round"/>
<path d="M65.7 528.4l4.300 4.200l4.300-4.200" fill="none" stroke="#404040" stroke-width="2"/>
<path d="M79 531.5h4" stroke="#8a8a8a" stroke-width="1" stroke-dasharray="1 1"/>
<path d="M103.5 543.5h11v9.500h1.300v5.500h-12.300z" fill="url(#fold)" stroke="#efc448" stroke-width="1"/>
<path d="M115.2 558.5v-5h-1.700v5" fill="#fdeaa8" stroke="#efc448" stroke-width="0.800"/>
<path d="M86.9 547.6l3.900 3.900l-3.900 3.900" fill="none" stroke="#a6a6a6" stroke-width="2"/>
<path d="M98 551.5h4" stroke="#8a8a8a" stroke-width="1" stroke-dasharray="1 1"/>
<path d="M103.5 563.5h11v9.500h1.300v5.500h-12.300z" fill="url(#fold)" stroke="#efc448" stroke-width="1"/>
<path d="M115.2 578.5v-5h-1.700v5" fill="#fdeaa8" stroke="#efc448" stroke-width="0.800"/>
<path d="M86.9 567.6l3.900 3.900l-3.900 3.900" fill="none" stroke="#a6a6a6" stroke-width="2"/>
<path d="M98 571.5h4" stroke="#8a8a8a" stroke-width="1" stroke-dasharray="1 1"/>
<path d="M103.5 583.5h11v9.500h1.300v5.500h-12.300z" fill="url(#fold)" stroke="#efc448" stroke-width="1"/>
<path d="M115.2 598.5v-5h-1.700v5" fill="#fdeaa8" stroke="#efc448" stroke-width="0.800"/>
<path d="M86.9 587.6l3.900 3.900l-3.900 3.900" fill="none" stroke="#a6a6a6" stroke-width="2"/>
<path d="M98 591.5h4" stroke="#8a8a8a" stroke-width="1" stroke-dasharray="1 1"/>
<path d="M103.5 603.5h11v9.500h1.300v5.500h-12.300z" fill="url(#fold)" stroke="#efc448" stroke-width="1"/>
<path d="M115.2 618.5v-5h-1.700v5" fill="#fdeaa8" stroke="#efc448" stroke-width="0.800"/>
<path d="M86.9 607.6l3.900 3.900l-3.900 3.900" fill="none" stroke="#a6a6a6" stroke-width="2"/>
<path d="M98 611.5h4" stroke="#8a8a8a" stroke-width="1" stroke-dasharray="1 1"/>
<path d="M103.5 623.5h11v9.500h1.300v5.500h-12.300z" fill="url(#fold)" stroke="#efc448" stroke-width="1"/>
<path d="M115.2 638.5v-5h-1.700v5" fill="#fdeaa8" stroke="#efc448" stroke-width="0.800"/>
<path d="M86.9 627.6l3.900 3.900l-3.900 3.900" fill="none" stroke="#a6a6a6" stroke-width="2"/>
<path d="M98 631.5h4" stroke="#8a8a8a" stroke-width="1" stroke-dasharray="1 1"/>
<path d="M103.5 643.5h11v9.500h1.300v5.500h-12.300z" fill="url(#fold)" stroke="#efc448" stroke-width="1"/>
<path d="M115.2 658.5v-5h-1.700v5" fill="#fdeaa8" stroke="#efc448" stroke-width="0.800"/>
<path d="M86.9 647.6l3.900 3.900l-3.900 3.900" fill="none" stroke="#a6a6a6" stroke-width="2"/>
<path d="M98 651.5h4" stroke="#8a8a8a" stroke-width="1" stroke-dasharray="1 1"/>
<path d="M103.5 663.5h11v9.500h1.300v5.500h-12.300z" fill="url(#fold)" stroke="#efc448" stroke-width="1"/>
<path d="M115.2 678.5v-5h-1.700v5" fill="#fdeaa8" stroke="#efc448" stroke-width="0.800"/>
<path d="M112.4 671h2.200v2.400h2.400v2.200h-2.400v2.400h-2.200v-2.400h-2.400v-2.200h2.400z" fill="#93de0a" stroke="#3f8a06" stroke-width="0.900" stroke-linejoin="round"/>
<path d="M84.5 683.5h11v9.500h1.300v5.500h-12.300z" fill="url(#fold)" stroke="#efc448" stroke-width="1"/>
<path d="M96.2 698.5v-5h-1.700v5" fill="#fdeaa8" stroke="#efc448" stroke-width="0.800"/>
<path d="M67.9 687.6l3.900 3.900l-3.900 3.900" fill="none" stroke="#a6a6a6" stroke-width="2"/>
<path d="M79 691.5h4" stroke="#8a8a8a" stroke-width="1" stroke-dasharray="1 1"/>
<path d="M46.5 703.5h11v9.500h1.300v5.500h-12.300z" fill="url(#fold)" stroke="#efc448" stroke-width="1"/>
<path d="M58.2 718.5v-5h-1.700v5" fill="#fdeaa8" stroke="#efc448" stroke-width="0.800"/>
<path d="M29.9 707.6l3.900 3.900l-3.900 3.900" fill="none" stroke="#a6a6a6" stroke-width="2"/>
<path d="M41 711.5h4" stroke="#8a8a8a" stroke-width="1" stroke-dasharray="1 1"/>
<path d="M33.5 139V143" stroke="#8a8a8a" stroke-width="1" stroke-dasharray="1 1"/>
<path d="M33.5 159V163" stroke="#8a8a8a" stroke-width="1" stroke-dasharray="1 1"/>
<path d="M33.5 179V183" stroke="#8a8a8a" stroke-width="1" stroke-dasharray="1 1"/>
<path d="M33.5 199V203" stroke="#8a8a8a" stroke-width="1" stroke-dasharray="1 1"/>
<path d="M33.5 219V223" stroke="#8a8a8a" stroke-width="1" stroke-dasharray="1 1"/>
<path d="M33.5 239V703" stroke="#8a8a8a" stroke-width="1" stroke-dasharray="1 1"/>
<path d="M52.5 239V243" stroke="#8a8a8a" stroke-width="1" stroke-dasharray="1 1"/>
<path d="M52.5 259V263" stroke="#8a8a8a" stroke-width="1" stroke-dasharray="1 1"/>
<path d="M52.5 279V283" stroke="#8a8a8a" stroke-width="1" stroke-dasharray="1 1"/>
<path d="M52.5 299V303" stroke="#8a8a8a" stroke-width="1" stroke-dasharray="1 1"/>
<path d="M52.5 319V323" stroke="#8a8a8a" stroke-width="1" stroke-dasharray="1 1"/>
<path d="M52.5 339V343" stroke="#8a8a8a" stroke-width="1" stroke-dasharray="1 1"/>
<path d="M71.5 359V363" stroke="#8a8a8a" stroke-width="1" stroke-dasharray="1 1"/>
<path d="M71.5 379V383" stroke="#8a8a8a" stroke-width="1" stroke-dasharray="1 1"/>
<path d="M71.5 399V403" stroke="#8a8a8a" stroke-width="1" stroke-dasharray="1 1"/>
<path d="M71.5 419V423" stroke="#8a8a8a" stroke-width="1" stroke-dasharray="1 1"/>
<path d="M71.5 439V443" stroke="#8a8a8a" stroke-width="1" stroke-dasharray="1 1"/>
<path d="M71.5 459V463" stroke="#8a8a8a" stroke-width="1" stroke-dasharray="1 1"/>
<path d="M71.5 479V483" stroke="#8a8a8a" stroke-width="1" stroke-dasharray="1 1"/>
<path d="M71.5 499V503" stroke="#8a8a8a" stroke-width="1" stroke-dasharray="1 1"/>
<path d="M71.5 519V523" stroke="#8a8a8a" stroke-width="1" stroke-dasharray="1 1"/>
<path d="M71.5 539V683" stroke="#8a8a8a" stroke-width="1" stroke-dasharray="1 1"/>
<path d="M90.5 539V543" stroke="#8a8a8a" stroke-width="1" stroke-dasharray="1 1"/>
<path d="M90.5 559V563" stroke="#8a8a8a" stroke-width="1" stroke-dasharray="1 1"/>
<path d="M90.5 579V583" stroke="#8a8a8a" stroke-width="1" stroke-dasharray="1 1"/>
<path d="M90.5 599V603" stroke="#8a8a8a" stroke-width="1" stroke-dasharray="1 1"/>
<path d="M90.5 619V623" stroke="#8a8a8a" stroke-width="1" stroke-dasharray="1 1"/>
<path d="M90.5 639V643" stroke="#8a8a8a" stroke-width="1" stroke-dasharray="1 1"/>
<path d="M90.5 659V671" stroke="#8a8a8a" stroke-width="1" stroke-dasharray="1 1"/>
<path d="M91 671.500h10" stroke="#8a8a8a" stroke-width="1" stroke-dasharray="1 1"/>
<path d="M696.800 125.200l4-4.200l4 4.200" fill="none" stroke="#5a5a5a" stroke-width="1.100"/>
<rect x="463.5" y="149.5" width="13" height="10" fill="#fff" stroke="#a6a6a6" stroke-width="1"/>
<path d="M466 154.2q0.500-2.500 2-2.800h4.500l-3.500 4.300h-2.500z" fill="#f26a1b"/>
<path d="M471.6 151.2l1.300 0.200l-3.300 4.600l-1.300-0.800z" fill="#86b52c"/>
<path d="M465 154.9q3.400 0.100 5.400 2.800h-5.400z" fill="#a9682e"/>
<rect x="472.8" y="153" width="2" height="1.800" fill="#b98a55"/><rect x="471.1" y="154.6" width="0.900" height="3.200" fill="#a7a7b0"/><rect x="473.4" y="154.8" width="0.700" height="2.400" fill="#b9b9c0"/>
<circle cx="473.6" cy="157.3" r="0.700" fill="#cc1f2d"/>
<rect x="463.5" y="170.5" width="13" height="10" fill="#fff" stroke="#a6a6a6" stroke-width="1"/>
<path d="M466 175.2q0.500-2.500 2-2.800h4.500l-3.500 4.300h-2.500z" fill="#f26a1b"/>
<path d="M471.6 172.2l1.300 0.200l-3.300 4.600l-1.300-0.800z" fill="#86b52c"/>
<path d="M465 175.9q3.400 0.100 5.400 2.800h-5.400z" fill="#a9682e"/>
<rect x="472.8" y="174" width="2" height="1.800" fill="#b98a55"/><rect x="471.1" y="175.6" width="0.900" height="3.200" fill="#a7a7b0"/><rect x="473.4" y="175.8" width="0.700" height="2.400" fill="#b9b9c0"/>
<circle cx="473.6" cy="178.3" r="0.700" fill="#cc1f2d"/>
<rect x="463.5" y="191.5" width="13" height="10" fill="#fff" stroke="#a6a6a6" stroke-width="1"/>
<path d="M466 196.2q0.500-2.500 2-2.800h4.500l-3.500 4.300h-2.500z" fill="#f26a1b"/>
<path d="M471.6 193.2l1.300 0.200l-3.300 4.600l-1.300-0.800z" fill="#86b52c"/>
<path d="M465 196.9q3.400 0.100 5.400 2.800h-5.400z" fill="#a9682e"/>
<rect x="472.8" y="195" width="2" height="1.800" fill="#b98a55"/><rect x="471.1" y="196.6" width="0.900" height="3.200" fill="#a7a7b0"/><rect x="473.4" y="196.8" width="0.700" height="2.400" fill="#b9b9c0"/>
<circle cx="473.6" cy="199.3" r="0.700" fill="#cc1f2d"/>
<rect x="463.5" y="212.5" width="13" height="10" fill="#fff" stroke="#a6a6a6" stroke-width="1"/>
<path d="M466 217.2q0.500-2.500 2-2.800h4.500l-3.500 4.300h-2.500z" fill="#f26a1b"/>
<path d="M471.6 214.2l1.300 0.200l-3.300 4.600l-1.300-0.800z" fill="#86b52c"/>
<path d="M465 217.9q3.400 0.100 5.400 2.800h-5.400z" fill="#a9682e"/>
<rect x="472.8" y="216" width="2" height="1.800" fill="#b98a55"/><rect x="471.1" y="217.6" width="0.900" height="3.200" fill="#a7a7b0"/><rect x="473.4" y="217.8" width="0.700" height="2.400" fill="#b9b9c0"/>
<circle cx="473.6" cy="220.3" r="0.700" fill="#cc1f2d"/>
<rect x="463.5" y="233.5" width="13" height="10" fill="#fff" stroke="#a6a6a6" stroke-width="1"/>
<path d="M466 238.2q0.500-2.500 2-2.800h4.500l-3.500 4.300h-2.500z" fill="#f26a1b"/>
<path d="M471.6 235.2l1.300 0.200l-3.300 4.600l-1.300-0.800z" fill="#86b52c"/>
<path d="M465 238.9q3.400 0.100 5.400 2.800h-5.400z" fill="#a9682e"/>
<rect x="472.8" y="237" width="2" height="1.800" fill="#b98a55"/><rect x="471.1" y="238.6" width="0.900" height="3.200" fill="#a7a7b0"/><rect x="473.4" y="238.8" width="0.700" height="2.400" fill="#b9b9c0"/>
<circle cx="473.6" cy="241.3" r="0.700" fill="#cc1f2d"/>
<rect x="463.5" y="254.5" width="13" height="10" fill="#fff" stroke="#a6a6a6" stroke-width="1"/>
<path d="M466 259.2q0.500-2.500 2-2.800h4.500l-3.500 4.300h-2.500z" fill="#f26a1b"/>
<path d="M471.6 256.2l1.300 0.200l-3.300 4.600l-1.300-0.800z" fill="#86b52c"/>
<path d="M465 259.9q3.400 0.100 5.400 2.800h-5.400z" fill="#a9682e"/>
<rect x="472.8" y="258" width="2" height="1.800" fill="#b98a55"/><rect x="471.1" y="259.6" width="0.900" height="3.200" fill="#a7a7b0"/><rect x="473.4" y="259.8" width="0.700" height="2.400" fill="#b9b9c0"/>
<circle cx="473.6" cy="262.3" r="0.700" fill="#cc1f2d"/>
<rect x="463.5" y="275.5" width="13" height="10" fill="#fff" stroke="#a6a6a6" stroke-width="1"/>
<path d="M466 280.2q0.500-2.500 2-2.800h4.500l-3.500 4.300h-2.500z" fill="#f26a1b"/>
<path d="M471.6 277.2l1.300 0.200l-3.300 4.600l-1.300-0.800z" fill="#86b52c"/>
<path d="M465 280.9q3.400 0.100 5.400 2.800h-5.400z" fill="#a9682e"/>
<rect x="472.8" y="279" width="2" height="1.800" fill="#b98a55"/><rect x="471.1" y="280.6" width="0.900" height="3.200" fill="#a7a7b0"/><rect x="473.4" y="280.8" width="0.700" height="2.400" fill="#b9b9c0"/>
<circle cx="473.6" cy="283.3" r="0.700" fill="#cc1f2d"/>
<rect x="463.5" y="296.5" width="13" height="10" fill="#fff" stroke="#a6a6a6" stroke-width="1"/>
<path d="M466 301.2q0.500-2.500 2-2.800h4.500l-3.500 4.300h-2.500z" fill="#f26a1b"/>
<path d="M471.6 298.2l1.300 0.200l-3.300 4.600l-1.300-0.800z" fill="#86b52c"/>
<path d="M465 301.9q3.400 0.100 5.400 2.800h-5.400z" fill="#a9682e"/>
<rect x="472.8" y="300" width="2" height="1.800" fill="#b98a55"/><rect x="471.1" y="301.6" width="0.900" height="3.200" fill="#a7a7b0"/><rect x="473.4" y="301.8" width="0.700" height="2.400" fill="#b9b9c0"/>
<circle cx="473.6" cy="304.3" r="0.700" fill="#cc1f2d"/>
<rect x="463.5" y="317.5" width="13" height="10" fill="#fff" stroke="#a6a6a6" stroke-width="1"/>
<path d="M466 322.2q0.500-2.500 2-2.800h4.500l-3.500 4.300h-2.500z" fill="#f26a1b"/>
<path d="M471.6 319.2l1.300 0.200l-3.300 4.600l-1.300-0.800z" fill="#86b52c"/>
<path d="M465 322.9q3.400 0.100 5.400 2.800h-5.400z" fill="#a9682e"/>
<rect x="472.8" y="321" width="2" height="1.800" fill="#b98a55"/><rect x="471.1" y="322.6" width="0.900" height="3.200" fill="#a7a7b0"/><rect x="473.4" y="322.8" width="0.700" height="2.400" fill="#b9b9c0"/>
<circle cx="473.6" cy="325.3" r="0.700" fill="#cc1f2d"/>
<rect x="463.5" y="338.5" width="13" height="10" fill="#fff" stroke="#a6a6a6" stroke-width="1"/>
<path d="M466 343.2q0.500-2.500 2-2.800h4.500l-3.500 4.300h-2.500z" fill="#f26a1b"/>
<path d="M471.6 340.2l1.300 0.200l-3.300 4.600l-1.300-0.800z" fill="#86b52c"/>
<path d="M465 343.9q3.400 0.100 5.400 2.800h-5.400z" fill="#a9682e"/>
<rect x="472.8" y="342" width="2" height="1.800" fill="#b98a55"/><rect x="471.1" y="343.6" width="0.900" height="3.200" fill="#a7a7b0"/><rect x="473.4" y="343.8" width="0.700" height="2.400" fill="#b9b9c0"/>
<circle cx="473.6" cy="346.3" r="0.700" fill="#cc1f2d"/>
<rect x="463.5" y="359.5" width="13" height="10" fill="#fff" stroke="#a6a6a6" stroke-width="1"/>
<path d="M466 364.2q0.500-2.500 2-2.800h4.500l-3.500 4.300h-2.500z" fill="#f26a1b"/>
<path d="M471.6 361.2l1.300 0.200l-3.300 4.600l-1.300-0.800z" fill="#86b52c"/>
<path d="M465 364.9q3.400 0.100 5.400 2.800h-5.400z" fill="#a9682e"/>
<rect x="472.8" y="363" width="2" height="1.800" fill="#b98a55"/><rect x="471.1" y="364.6" width="0.900" height="3.200" fill="#a7a7b0"/><rect x="473.4" y="364.8" width="0.700" height="2.400" fill="#b9b9c0"/>
<circle cx="473.6" cy="367.3" r="0.700" fill="#cc1f2d"/>
<rect x="463.5" y="380.5" width="13" height="10" fill="#fff" stroke="#a6a6a6" stroke-width="1"/>
<path d="M466 385.2q0.500-2.500 2-2.800h4.500l-3.500 4.300h-2.500z" fill="#f26a1b"/>
<path d="M471.6 382.2l1.300 0.200l-3.300 4.600l-1.300-0.800z" fill="#86b52c"/>
<path d="M465 385.9q3.400 0.100 5.400 2.800h-5.400z" fill="#a9682e"/>
<rect x="472.8" y="384" width="2" height="1.800" fill="#b98a55"/><rect x="471.1" y="385.6" width="0.900" height="3.200" fill="#a7a7b0"/><rect x="473.4" y="385.8" width="0.700" height="2.400" fill="#b9b9c0"/>
<circle cx="473.6" cy="388.3" r="0.700" fill="#cc1f2d"/>
<rect x="463.5" y="401.5" width="13" height="10" fill="#fff" stroke="#a6a6a6" stroke-width="1"/>
<path d="M466 406.2q0.500-2.500 2-2.800h4.500l-3.500 4.300h-2.500z" fill="#f26a1b"/>
<path d="M471.6 403.2l1.300 0.200l-3.300 4.600l-1.300-0.800z" fill="#86b52c"/>
<path d="M465 406.9q3.400 0.100 5.400 2.800h-5.400z" fill="#a9682e"/>
<rect x="472.8" y="405" width="2" height="1.800" fill="#b98a55"/><rect x="471.1" y="406.6" width="0.900" height="3.200" fill="#a7a7b0"/><rect x="473.4" y="406.8" width="0.700" height="2.400" fill="#b9b9c0"/>
<circle cx="473.6" cy="409.3" r="0.700" fill="#cc1f2d"/>
<rect x="463.5" y="422.5" width="13" height="10" fill="#fff" stroke="#a6a6a6" stroke-width="1"/>
<path d="M466 427.2q0.500-2.500 2-2.800h4.500l-3.500 4.300h-2.500z" fill="#f26a1b"/>
<path d="M471.6 424.2l1.300 0.200l-3.300 4.600l-1.300-0.800z" fill="#86b52c"/>
<path d="M465 427.9q3.400 0.100 5.400 2.800h-5.400z" fill="#a9682e"/>
<rect x="472.8" y="426" width="2" height="1.800" fill="#b98a55"/><rect x="471.1" y="427.6" width="0.900" height="3.200" fill="#a7a7b0"/><rect x="473.4" y="427.8" width="0.700" height="2.400" fill="#b9b9c0"/>
<circle cx="473.6" cy="430.3" r="0.700" fill="#cc1f2d"/>
<rect x="463.5" y="443.5" width="13" height="10" fill="#fff" stroke="#a6a6a6" stroke-width="1"/>
<path d="M466 448.2q0.500-2.500 2-2.800h4.500l-3.500 4.300h-2.500z" fill="#f26a1b"/>
<path d="M471.6 445.2l1.300 0.200l-3.300 4.600l-1.300-0.800z" fill="#86b52c"/>
<path d="M465 448.9q3.400 0.100 5.400 2.800h-5.400z" fill="#a9682e"/>
<rect x="472.8" y="447" width="2" height="1.800" fill="#b98a55"/><rect x="471.1" y="448.6" width="0.900" height="3.200" fill="#a7a7b0"/><rect x="473.4" y="448.8" width="0.700" height="2.400" fill="#b9b9c0"/>
<circle cx="473.6" cy="451.3" r="0.700" fill="#cc1f2d"/>
<rect x="463.5" y="464.5" width="13" height="10" fill="#fff" stroke="#a6a6a6" stroke-width="1"/>
<path d="M466 469.2q0.500-2.500 2-2.800h4.500l-3.500 4.300h-2.500z" fill="#f26a1b"/>
<path d="M471.6 466.2l1.300 0.200l-3.300 4.600l-1.300-0.800z" fill="#86b52c"/>
<path d="M465 469.9q3.400 0.100 5.400 2.800h-5.400z" fill="#a9682e"/>
<rect x="472.8" y="468" width="2" height="1.800" fill="#b98a55"/><rect x="471.1" y="469.6" width="0.900" height="3.200" fill="#a7a7b0"/><rect x="473.4" y="469.8" width="0.700" height="2.400" fill="#b9b9c0"/>
<circle cx="473.6" cy="472.3" r="0.700" fill="#cc1f2d"/>
<rect x="463.5" y="485.5" width="13" height="10" fill="#fff" stroke="#a6a6a6" stroke-width="1"/>
<path d="M466 490.2q0.500-2.500 2-2.800h4.500l-3.500 4.300h-2.500z" fill="#f26a1b"/>
<path d="M471.6 487.2l1.300 0.200l-3.300 4.600l-1.300-0.800z" fill="#86b52c"/>
<path d="M465 490.9q3.400 0.100 5.400 2.800h-5.400z" fill="#a9682e"/>
<rect x="472.8" y="489" width="2" height="1.800" fill="#b98a55"/><rect x="471.1" y="490.6" width="0.900" height="3.200" fill="#a7a7b0"/><rect x="473.4" y="490.8" width="0.700" height="2.400" fill="#b9b9c0"/>
<circle cx="473.6" cy="493.3" r="0.700" fill="#cc1f2d"/>
<rect x="463.5" y="506.5" width="13" height="10" fill="#fff" stroke="#a6a6a6" stroke-width="1"/>
<path d="M466 511.2q0.500-2.500 2-2.800h4.500l-3.500 4.300h-2.500z" fill="#f26a1b"/>
<path d="M471.6 508.2l1.300 0.200l-3.300 4.600l-1.300-0.800z" fill="#86b52c"/>
<path d="M465 511.9q3.400 0.100 5.400 2.800h-5.400z" fill="#a9682e"/>
<rect x="472.8" y="510" width="2" height="1.800" fill="#b98a55"/><rect x="471.1" y="511.6" width="0.900" height="3.200" fill="#a7a7b0"/><rect x="473.4" y="511.8" width="0.700" height="2.400" fill="#b9b9c0"/>
<circle cx="473.6" cy="514.3" r="0.700" fill="#cc1f2d"/>
<rect x="463.5" y="527.5" width="13" height="10" fill="#fff" stroke="#a6a6a6" stroke-width="1"/>
<path d="M466 532.2q0.500-2.500 2-2.800h4.500l-3.500 4.300h-2.500z" fill="#f26a1b"/>
<path d="M471.6 529.2l1.300 0.200l-3.300 4.600l-1.300-0.800z" fill="#86b52c"/>
<path d="M465 532.9q3.400 0.100 5.400 2.800h-5.400z" fill="#a9682e"/>
<rect x="472.8" y="531" width="2" height="1.800" fill="#b98a55"/><rect x="471.1" y="532.6" width="0.900" height="3.200" fill="#a7a7b0"/><rect x="473.4" y="532.8" width="0.700" height="2.400" fill="#b9b9c0"/>
<circle cx="473.6" cy="535.3" r="0.700" fill="#cc1f2d"/>
<path d="M464.5 546.5h8l3 3v12h-11z" fill="#fff" stroke="#8c8c8c" stroke-width="1"/>
<path d="M472.5 546.5v3h3" fill="none" stroke="#8c8c8c" stroke-width="0.900"/>
<rect x="466" y="550.7" width="8" height="7.500" fill="url(#vid)"/>
<path d="M466.6 552.6h8" stroke="#dff1fc" stroke-width="0.700"/>
<path d="M469 553.9v3.200l2.400-1.600z" fill="#fff"/>
<path d="M464.5 567.5h8l3 3v12h-11z" fill="#fff" stroke="#8c8c8c" stroke-width="1"/>
<path d="M472.5 567.5v3h3" fill="none" stroke="#8c8c8c" stroke-width="0.900"/>
<rect x="466" y="571.7" width="8" height="7.500" fill="url(#vid)"/>
<path d="M466.6 573.6h8" stroke="#dff1fc" stroke-width="0.700"/>
<path d="M469 574.9v3.200l2.400-1.600z" fill="#fff"/>
<path d="M464.5 588.5h8l3 3v12h-11z" fill="#fff" stroke="#8c8c8c" stroke-width="1"/>
<path d="M472.5 588.5v3h3" fill="none" stroke="#8c8c8c" stroke-width="0.900"/>
<rect x="466" y="592.7" width="8" height="7.500" fill="url(#vid)"/>
<path d="M466.6 594.6h8" stroke="#dff1fc" stroke-width="0.700"/>
<path d="M469 595.9v3.200l2.400-1.600z" fill="#fff"/>
<path d="M464.5 609.5h8l3 3v12h-11z" fill="#fff" stroke="#8c8c8c" stroke-width="1"/>
<path d="M472.5 609.5v3h3" fill="none" stroke="#8c8c8c" stroke-width="0.900"/>
<rect x="466" y="613.7" width="8" height="7.500" fill="url(#vid)"/>
<path d="M466.6 615.6h8" stroke="#dff1fc" stroke-width="0.700"/>
<path d="M469 616.9v3.200l2.400-1.600z" fill="#fff"/>
<path d="M464.5 630.5h8l3 3v12h-11z" fill="#fff" stroke="#8c8c8c" stroke-width="1"/>
<path d="M472.5 630.5v3h3" fill="none" stroke="#8c8c8c" stroke-width="0.900"/>
<rect x="466" y="634.7" width="8" height="7.500" fill="url(#vid)"/>
<path d="M466.6 636.6h8" stroke="#dff1fc" stroke-width="0.700"/>
<path d="M469 637.9v3.200l2.400-1.600z" fill="#fff"/>
<path d="M464.5 651.5h8l3 3v12h-11z" fill="#fff" stroke="#8c8c8c" stroke-width="1"/>
<path d="M472.5 651.5v3h3" fill="none" stroke="#8c8c8c" stroke-width="0.900"/>
<rect x="466" y="655.7" width="8" height="7.500" fill="url(#vid)"/>
<path d="M466.6 657.6h8" stroke="#dff1fc" stroke-width="0.700"/>
<path d="M469 658.9v3.200l2.400-1.600z" fill="#fff"/>
<path d="M464.5 672.5h8l3 3v12h-11z" fill="#fff" stroke="#8c8c8c" stroke-width="1"/>
<path d="M472.5 672.5v3h3" fill="none" stroke="#8c8c8c" stroke-width="0.900"/>
<rect x="466" y="676.7" width="8" height="7.500" fill="url(#vid)"/>
<path d="M466.6 678.6h8" stroke="#dff1fc" stroke-width="0.700"/>
<path d="M469 679.9v3.200l2.400-1.600z" fill="#fff"/>
<path d="M464.5 693.5h8l3 3v12h-11z" fill="#fff" stroke="#8c8c8c" stroke-width="1"/>
<path d="M472.5 693.5v3h3" fill="none" stroke="#8c8c8c" stroke-width="0.900"/>
<rect x="466" y="697.7" width="8" height="7.500" fill="url(#vid)"/>
<path d="M466.6 699.6h8" stroke="#dff1fc" stroke-width="0.700"/>
<path d="M469 700.9v3.200l2.400-1.600z" fill="#fff"/>
<path d="M1251.200 132l3.300-3.600l3.300 3.600" fill="none" stroke="#5a5a5a" stroke-width="2"/>
<path d="M1251.200 719.800l3.300 3.600l3.300-3.600" fill="none" stroke="#5a5a5a" stroke-width="2"/>
<path d="M1251.300 788.200l3.300-3.600l3.300 3.600" fill="none" stroke="#5a5a5a" stroke-width="2"/>
<g transform="translate(0 0.700)">
<path d="M311.500 1027v-2.200a3.500 3.300 0 0 1 7 0v2.200" fill="none" stroke="#b4b4b4" stroke-width="1.400"/>
<rect x="308.900" y="1027.400" width="12.400" height="8.400" rx="0.800" fill="#d6d6d6" stroke="#ababab" stroke-width="0.900"/>
<rect x="325.500" y="1023.900" width="14.800" height="12.200" fill="#fcfcfc" stroke="#9a9a9a" stroke-width="1"/>
<path d="M328 1026.500h4.500l4 6" fill="none" stroke="#555" stroke-width="1.400"/><path d="M334 1026.500h4" stroke="#b5b5b5" stroke-width="1.200"/>
<rect x="348.500" y="1022" width="9.500" height="11" fill="#e4e4e4" stroke="#8f8f8f" stroke-width="1"/>
<rect x="347.200" y="1021.300" width="11.800" height="1.800" fill="#8f8f8f"/><rect x="347.200" y="1032" width="11.800" height="1.600" fill="#8f8f8f"/>
<rect x="351" y="1024.500" width="5" height="6" fill="#c9c9c9"/>
<path d="M343.500 1023.500h4.500v12.500m-4.500 0h6m-3-3v3" fill="none" stroke="#8a8a8a" stroke-width="1.200"/>
<path d="M344.500 1026v5" stroke="#555" stroke-width="1.200" stroke-dasharray="1 1"/><path d="M346.500 1026v5" stroke="#555" stroke-width="1.200" stroke-dasharray="1 1"/>
</g>
<clipPath id="imeclip"><rect x="1140" y="955" width="123" height="93"/></clipPath>
<g clip-path="url(#imeclip)"><rect x="1151.200" y="969.800" width="109.600" height="68.400" rx="9" fill="#fff3d6" stroke="#e08c22" stroke-width="2.200"/><path d="M1151.800 979v50" stroke="#e08c22" stroke-width="2.600"/><rect x="1156.500" y="973.200" width="39.200" height="61.600" rx="7" fill="#fff" stroke="#e08c22" stroke-width="1.100"/><text x="1166.300" y="995.800" font-family="'Noto Sans CJK SC',sans-serif" font-size="17" font-weight="500" fill="#e08c22" stroke="#e08c22" stroke-width="0.500">中</text><circle cx="1163.800" cy="1005.600" r="2.200" fill="none" stroke="#e08c22" stroke-width="1.100"/><path d="M1170 1003.500q3.500-0.500 3.300 2.500q-0.500 3-4.300 3.600q2.500-1.500 2.200-3.200q-1.700-0.200-1.200-2.900z" fill="#e08c22"/><path d="M1181.500 1001.200a6.500 6.500 0 1 1 -5.400 9.300a5.600 5.600 0 0 0 5.400-9.300z" fill="#e08c22"/><path d="M0.00 6.60L-13.45 3.74L-11.62 0.52L-9.28 -2.12L-7.13 -5.16L-3.52 -6.02L0.00 -4.87L3.70 -6.65L6.78 -4.60L9.29 -2.13L12.20 0.22L12.80 3.88Z" fill="#fbc916" transform="translate(1195.5 974.5) rotate(-25)"/><path d="M0.00 6.16L-12.56 3.49L-10.83 0.50L-8.67 -1.99L-6.65 -4.83L-3.28 -5.60L0.00 -4.55L3.45 -6.21L6.32 -4.28L8.68 -1.99L11.39 0.21L11.93 3.62Z" fill="#fcd022" transform="translate(1213.5 970.0) rotate(5)"/><path d="M0.00 3.96L-7.68 2.33L-7.32 0.14L-5.57 -1.27L-4.07 -2.76L-2.22 -3.99L0.00 -2.92L2.12 -3.62L4.27 -3.10L5.57 -1.27L6.98 0.31L8.07 2.25Z" fill="#f9b90f" transform="translate(1211.5 978.5) rotate(150)"/><path d="M0.00 3.30L-6.18 1.99L-5.90 0.21L-4.97 -1.37L-3.27 -2.10L-1.79 -3.12L0.00 -2.84L1.70 -2.78L3.46 -2.41L4.97 -1.36L5.60 0.37L6.53 1.91Z" fill="#f9b90f" transform="translate(1227.0 973.5) rotate(100)"/><path d="M0.00 6.16L-12.29 3.55L-10.43 0.71L-9.21 -2.49L-6.50 -4.58L-3.16 -5.17L0.00 -5.22L3.37 -5.92L6.10 -3.91L9.22 -2.50L11.11 0.35L11.51 3.71Z" fill="#fbc916" transform="translate(1251.5 983.0) rotate(50)"/><path d="M0.00 3.96L-7.78 2.31L-6.73 0.44L-5.99 -1.66L-4.12 -2.84L-2.04 -3.36L0.00 -3.43L2.14 -3.69L3.94 -2.54L5.99 -1.67L7.04 0.28L7.44 2.38Z" fill="#fcd022" transform="translate(1252.0 978.5) rotate(20)"/><path d="M0.00 4.40L-8.81 2.53L-7.45 0.51L-6.56 -1.76L-4.66 -3.30L-2.26 -3.69L0.00 -3.70L2.42 -4.26L4.35 -2.79L6.57 -1.77L7.96 0.24L8.22 2.65Z" fill="#fcd022" transform="translate(1206.5 985.5) rotate(40)"/><path d="M0.00 6.16L-12.59 3.48L-10.68 0.57L-8.77 -2.08L-6.67 -4.85L-3.24 -5.44L0.00 -4.68L3.46 -6.24L6.24 -4.14L8.78 -2.09L11.41 0.20L11.77 3.66Z" fill="#fbc916" transform="translate(1196.0 1000.5) rotate(-80)"/><path d="M0.00 5.50L-10.39 3.29L-10.16 0.19L-7.95 -1.97L-5.50 -3.59L-3.08 -5.55L0.00 -4.31L2.86 -4.74L5.94 -4.31L7.94 -1.96L9.42 0.57L11.22 3.11Z" fill="#f9b90f" transform="translate(1210.5 1001.5) rotate(10)"/><path d="M0.00 5.50L-11.24 3.11L-9.51 0.53L-7.85 -1.87L-5.95 -4.33L-2.89 -4.83L0.00 -4.20L3.09 -5.57L5.55 -3.67L7.86 -1.88L10.19 0.18L10.48 3.27Z" fill="#fcd022" transform="translate(1232.0 992.5) rotate(55)"/><path d="M0.00 6.16L-12.56 3.49L-10.55 0.65L-8.91 -2.21L-6.65 -4.82L-3.20 -5.30L0.00 -4.85L3.45 -6.20L6.16 -4.01L8.92 -2.22L11.37 0.21L11.62 3.69Z" fill="#fbc916" transform="translate(1205.5 1014.5) rotate(175)"/><path d="M0.00 4.62L-9.35 2.63L-8.25 0.31L-6.45 -1.44L-4.96 -3.56L-2.50 -4.33L0.00 -3.35L2.57 -4.60L4.81 -3.33L6.46 -1.44L8.49 0.18L9.08 2.69Z" fill="#fcd022" transform="translate(1222.0 1010.0) rotate(-175)"/><path d="M0.00 3.52L-6.59 2.12L-6.45 0.15L-5.18 -1.34L-3.49 -2.25L-1.96 -3.49L0.00 -2.86L1.81 -2.97L3.77 -2.71L5.17 -1.33L5.98 0.40L7.13 2.00Z" fill="#fcd022" transform="translate(1201.0 992.0) rotate(-40)"/><path d="M0.00 7.04L-13.91 4.08L-12.89 0.30L-9.82 -2.18L-7.37 -5.13L-3.91 -6.96L0.00 -5.08L3.83 -6.67L7.53 -5.39L9.82 -2.18L12.63 0.44L14.20 4.02Z" fill="#f9b90f" transform="translate(1239.0 1004.0) rotate(-35)"/><path d="M0.00 7.26L-14.66 4.14L-12.31 0.82L-10.70 -2.79L-7.76 -5.56L-3.73 -6.12L0.00 -5.97L4.03 -7.16L7.19 -4.62L10.72 -2.81L13.26 0.33L13.58 4.37Z" fill="#f7a90a" transform="translate(1251.0 1010.0) rotate(25)"/><path d="M0.00 6.60L-12.36 3.97L-11.81 0.42L-9.94 -2.73L-6.54 -4.20L-3.59 -6.25L0.00 -5.67L3.40 -5.56L6.92 -4.82L9.93 -2.72L11.19 0.75L13.07 3.82Z" fill="#fbc916" transform="translate(1236.0 1018.0) rotate(-110)"/><path d="M0.00 7.04L-14.27 4.01L-12.54 0.49L-9.84 -2.20L-7.56 -5.45L-3.80 -6.57L0.00 -5.12L3.93 -7.03L7.32 -5.04L9.85 -2.21L12.95 0.27L13.81 4.11Z" fill="#f9b90f" transform="translate(1249.0 1023.0) rotate(140)"/><path d="M0.00 5.50L-11.24 3.11L-9.51 0.53L-7.86 -1.88L-5.95 -4.33L-2.88 -4.83L0.00 -4.21L3.09 -5.57L5.55 -3.67L7.87 -1.89L10.18 0.18L10.47 3.27Z" fill="#fcd022" transform="translate(1241.0 1030.0) rotate(-165)"/><path d="M0.00 5.06L-9.49 3.04L-9.30 0.20L-7.41 -1.89L-5.03 -3.24L-2.82 -5.05L0.00 -4.08L2.61 -4.29L5.44 -3.92L7.40 -1.88L8.61 0.56L10.27 2.88Z" fill="#fbc916" transform="translate(1255.0 1031.0) rotate(170)"/><path d="M0.00 3.96L-7.83 2.29L-7.24 0.17L-5.52 -1.23L-4.15 -2.90L-2.20 -3.91L0.00 -2.86L2.16 -3.77L4.23 -3.02L5.52 -1.22L7.11 0.24L7.98 2.26Z" fill="#fbc916" transform="translate(1257.0 1000.0) rotate(80)"/><path d="M0.00 3.52L-6.74 2.09L-6.52 0.11L-5.01 -1.18L-3.57 -2.38L-1.98 -3.57L0.00 -2.66L1.86 -3.12L3.81 -2.77L5.00 -1.18L6.12 0.32L7.19 1.99Z" fill="#f9b90f" transform="translate(1229.0 1003.0) rotate(-60)"/><path d="M0.00 5.50L-10.30 3.31L-9.85 0.35L-8.28 -2.27L-5.45 -3.50L-2.99 -5.21L0.00 -4.72L2.83 -4.63L5.77 -4.02L8.27 -2.27L9.32 0.63L10.90 3.18Z" fill="#fbc916" transform="translate(1245.0 1015.0) rotate(0)"/><path d="M0.00 4.84L-9.53 2.81L-8.88 0.20L-6.76 -1.51L-5.05 -3.50L-2.69 -4.80L0.00 -3.50L2.62 -4.56L5.18 -3.72L6.76 -1.50L8.66 0.31L9.79 2.76Z" fill="#f9b90f" transform="translate(1203.0 979.0) rotate(60)"/><path d="M0.00 3.96L-7.42 2.38L-7.26 0.16L-5.81 -1.50L-3.93 -2.53L-2.21 -3.94L0.00 -3.21L2.04 -3.35L4.25 -3.06L5.80 -1.49L6.73 0.44L8.03 2.25Z" fill="#fbc916" transform="translate(1219.0 976.0) rotate(-30)"/><path d="M0.00 4.84L-9.53 2.81L-8.88 0.20L-6.76 -1.51L-5.05 -3.50L-2.69 -4.80L0.00 -3.50L2.62 -4.56L5.18 -3.72L6.76 -1.50L8.66 0.31L9.79 2.76Z" fill="#fcd022" transform="translate(1203.0 1006.0) rotate(100)"/><path d="M0.00 3.52L-7.12 2.01L-5.97 0.40L-5.17 -1.34L-3.77 -2.71L-1.81 -2.97L0.00 -2.87L1.96 -3.49L3.49 -2.24L5.18 -1.35L6.44 0.15L6.59 2.12Z" fill="#fbc916" transform="translate(1215.0 992.0) rotate(-100)"/><path d="M0.00 6.16L-11.75 3.66L-10.70 0.57L-9.38 -2.65L-6.22 -4.11L-3.25 -5.48L0.00 -5.43L3.23 -5.40L6.26 -4.18L9.38 -2.65L10.63 0.60L11.83 3.64Z" fill="#f7a90a" transform="translate(1244.0 1024.0) rotate(60)"/><path d="M0.00 5.06L-10.23 2.89L-8.58 0.57L-7.45 -1.94L-5.42 -3.88L-2.60 -4.27L0.00 -4.14L2.81 -5.00L5.02 -3.22L7.46 -1.95L9.25 0.22L9.47 3.05Z" fill="#fcd022" transform="translate(1233.0 1010.0) rotate(20)"/><path d="M0.00 5.06L-9.71 3.00L-9.37 0.16L-7.19 -1.69L-5.14 -3.43L-2.84 -5.12L0.00 -3.81L2.67 -4.51L5.48 -3.98L7.18 -1.68L8.81 0.45L10.34 2.86Z" fill="#f9b90f" transform="translate(1256.0 1018.0) rotate(-60)"/><path d="M0.00 3.96L-7.59 2.35L-7.33 0.13L-5.63 -1.32L-4.02 -2.68L-2.23 -4.01L0.00 -2.98L2.09 -3.53L4.29 -3.12L5.62 -1.32L6.89 0.36L8.09 2.24Z" fill="#f9b90f" transform="translate(1247.0 987.0) rotate(-120)"/><path d="M1215 990l8 8.500M1227 997.500q9-4.500 18-2.500q7 3.500 14 5" fill="none" stroke="#7a1a10" stroke-width="0.900"/><path d="M1220 971.500l4.500 5.500l6 7" fill="none" stroke="#d9402a" stroke-width="0.600"/></g></svg>
</body></html>
